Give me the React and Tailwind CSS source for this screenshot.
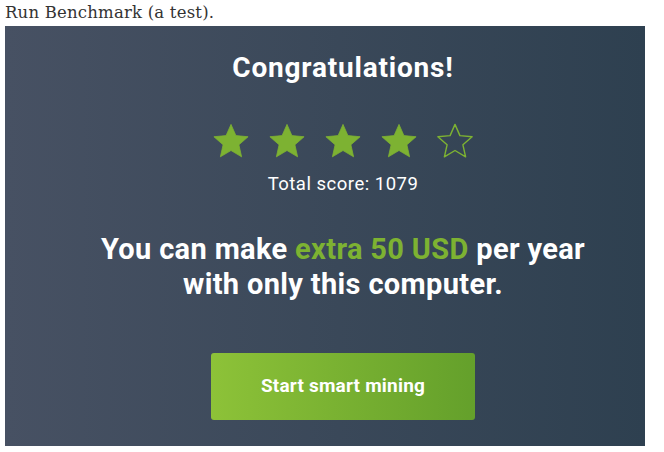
import React from 'react';

const Star = ({ filled }) => (
  <svg width="38" height="38" viewBox="0 0 24 24">
    <polygon
      points="12,1.5 15.1,8.6 22.8,9.3 17,14.4 18.7,22 12,18 5.3,22 7,14.4 1.2,9.3 8.9,8.6"
      fill={filled ? '#7db232' : 'none'}
      stroke="#7db232"
      strokeWidth={filled ? 0.5 : 0.9}
      strokeLinejoin="round"
    />
  </svg>
);

const App = () => {
  return (
    <div className="bg-white w-[664px] h-[452px]">
      <p className="pl-[5px] text-[16.5px] leading-[26px] text-[#333] font-['DejaVu_Serif',serif] tracking-[0.2px]">
        Run Benchmark (a test).
      </p>
      <div className="mx-[5px] w-[640px] h-[420px] bg-gradient-to-r from-[#475163] to-[#2e4050] pl-[36px] pt-[26px] font-['Roboto',sans-serif] text-white text-center">
        <h1 className="text-[28px] leading-[32px] font-bold tracking-[0.8px]">Congratulations!</h1>
        <div className="flex justify-center gap-[18px] mt-[38px]">
          <Star filled />
          <Star filled />
          <Star filled />
          <Star filled />
          <Star />
        </div>
        <p className="text-[18.5px] leading-[22px] mt-[13px] tracking-[0.5px]">Total score: 1079</p>
        <p className="text-[29px] leading-[35px] font-bold mt-[37px] tracking-[0.35px]">
          You can make <span className="text-[#7db232]">extra 50 USD</span> per year
          <br />
          with only this computer.
        </p>
        <div className="flex justify-center mt-[51px]">
          <button className="w-[264px] h-[67px] rounded-[3px] bg-gradient-to-r from-[#8dc238] to-[#64a02b] text-white text-[19px] font-bold tracking-[0.2px]">
            Start smart mining
          </button>
        </div>
      </div>
    </div>
  );
};

export default App;
